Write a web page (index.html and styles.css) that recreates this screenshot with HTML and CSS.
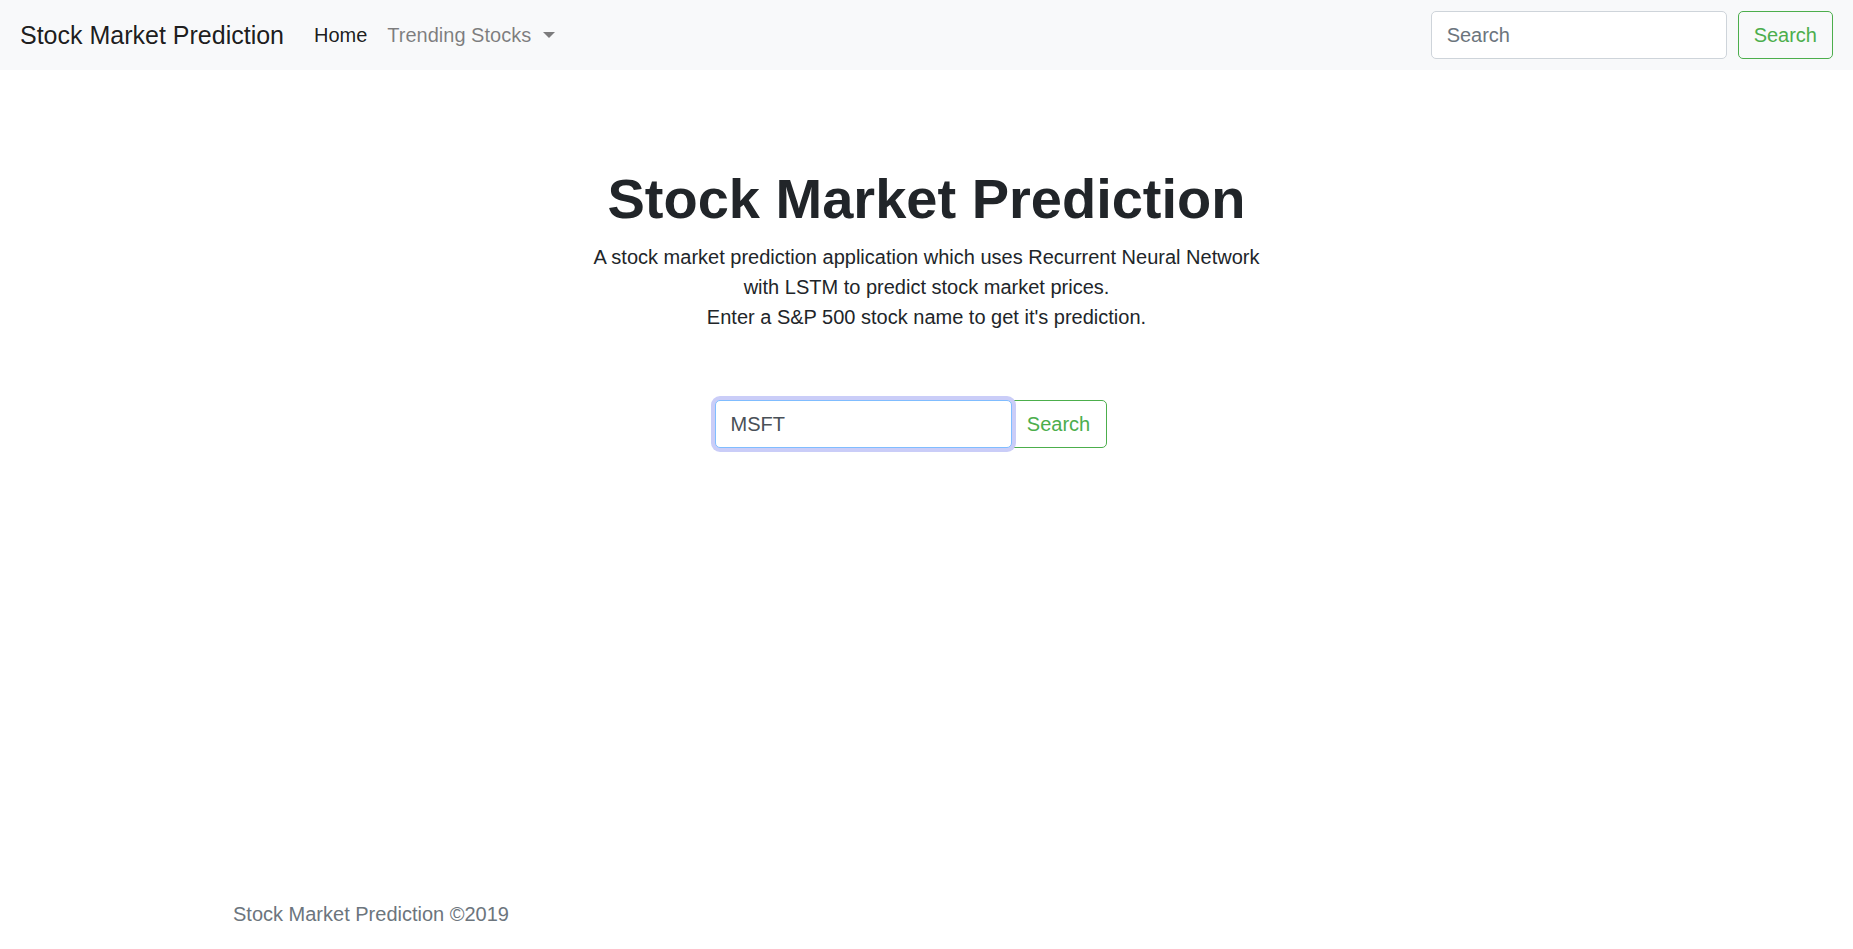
FILE: index.html
```html
<!DOCTYPE html>
<html lang="en">
<head>
<meta charset="utf-8">
<title>Stock Market Prediction</title>
<link rel="stylesheet" href="styles.css">
</head>
<body>
<div class="page">
  <nav class="navbar">
    <a class="brand" href="#">Stock Market Prediction</a>
    <ul class="nav">
      <li><a class="nav-link active" href="#">Home</a></li>
      <li><a class="nav-link muted" href="#">Trending Stocks<span class="caret"></span></a></li>
    </ul>
    <form class="nav-search">
      <input class="form-control nav-input" type="text" placeholder="Search">
      <button class="btn-outline" type="button">Search</button>
    </form>
  </nav>

  <main class="hero">
    <h1 class="title">Stock Market Prediction</h1>
    <p class="lead">A stock market prediction application which uses Recurrent Neural Network<br>with LSTM to predict stock market prices.<br>Enter a S&amp;P 500 stock name to get it's prediction.</p>
    <form class="main-search">
      <input class="form-control main-input focused" type="text" value="MSFT">
      <button class="btn-outline btn-attached" type="button">Search</button>
    </form>
  </main>

  <footer class="footer">
    <div class="container">Stock Market Prediction ©2019</div>
  </footer>
</div>
</body>
</html>
```

FILE: styles.css
```css
* { box-sizing: border-box; }
html, body { margin: 0; padding: 0; }
body {
  font-family: "Liberation Sans", Arial, Helvetica, sans-serif;
  font-size: 20px;
  line-height: 1.5;
  color: #212529;
  background: #fff;
}
.page {
  min-height: 100vh;
  display: flex;
  flex-direction: column;
}
a { text-decoration: none; }

.navbar {
  display: flex;
  align-items: center;
  height: 70px;
  padding: 10px 20px;
  background: #f8f9fa;
}
.brand {
  font-size: 25px;
  line-height: 1.5;
  color: rgba(0,0,0,.9);
  margin-right: 20px;
  padding: 7px 0 5px;
}
.nav {
  display: flex;
  list-style: none;
  margin: 0;
  padding: 0;
  flex: 1;
}
.nav-link {
  display: flex;
  align-items: center;
  padding: 10px 10px;
  font-size: 20px;
}
.nav-link.active { color: rgba(0,0,0,.9); }
.nav-link.muted { color: rgba(0,0,0,.5); }
.caret {
  display: inline-block;
  margin-left: 12px;
  width: 0;
  height: 0;
  border-top: 6px solid rgba(0,0,0,.5);
  border-left: 6px solid transparent;
  border-right: 6px solid transparent;
}

.nav-search {
  display: flex;
  align-items: center;
}
.form-control {
  height: 48px;
  padding: 7px 15px;
  font-family: inherit;
  font-size: 20px;
  line-height: 1.5;
  color: #495057;
  background: #fff;
  border: 1px solid #ced4da;
  border-radius: 5px;
  outline: none;
}
.form-control::placeholder { color: #6c757d; }
.nav-input { width: 296px; margin-right: 11px; }

.btn-outline {
  height: 48px;
  padding: 7px 15px;
  font-family: inherit;
  font-size: 20px;
  line-height: 1.5;
  color: #4cae4c;
  background: transparent;
  border: 1px solid #4cae4c;
  border-radius: 5px;
  cursor: pointer;
}

.hero {
  flex: 1;
  display: flex;
  flex-direction: column;
  align-items: center;
  text-align: center;
  padding-top: 95px;
}
.title {
  margin: 0 0 10px;
  font-size: 56px;
  font-weight: 700;
  line-height: 1.2;
  color: #212529;
}
.lead {
  margin: 0;
  font-size: 20px;
  line-height: 1.5;
  color: #212529;
}
.main-search {
  display: flex;
  margin-top: 68px;
  margin-right: 32px;
}
.main-input {
  width: 297px;
  position: relative;
  z-index: 1;
}
.main-input.focused {
  border-color: #80bdff;
  box-shadow: 0 0 0 4px #cacdf8;
}
.btn-attached {
  width: 96px;
  margin-left: -1px;
  border-radius: 0 5px 5px 0;
}

.footer {
  padding-bottom: 20px;
}
.container {
  max-width: 1425px;
  margin: 0 auto;
  padding: 0 19px;
  color: #6c757d;
  font-size: 20px;
  line-height: 1.5;
}
```
